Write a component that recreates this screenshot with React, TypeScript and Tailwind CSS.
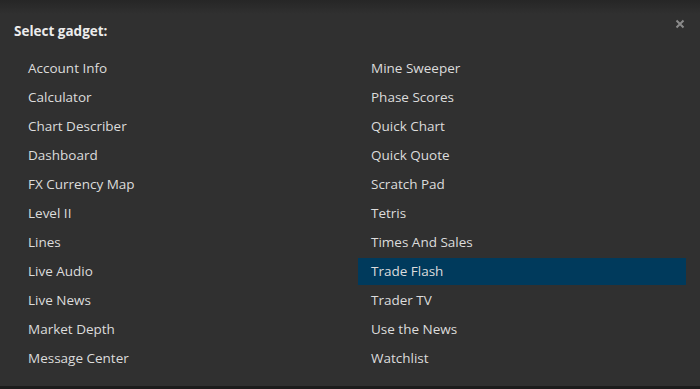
import React from "react";

const left = [
  "Account Info",
  "Calculator",
  "Chart Describer",
  "Dashboard",
  "FX Currency Map",
  "Level II",
  "Lines",
  "Live Audio",
  "Live News",
  "Market Depth",
  "Message Center",
];
const right = [
  "Mine Sweeper",
  "Phase Scores",
  "Quick Chart",
  "Quick Quote",
  "Scratch Pad",
  "Tetris",
  "Times And Sales",
  "Trade Flash",
  "Trader TV",
  "Use the News",
  "Watchlist",
];

export default function App() {
  const items = [...left, ...right];
  return (
    <div
      className="relative w-[700px] h-[389px] overflow-hidden bg-[#303030] text-[#dcdcdc]"
      style={{ fontFamily: '"Open Sans", "Liberation Sans", sans-serif' }}
    >
      <div className="absolute inset-x-0 top-0 h-[14px] bg-gradient-to-b from-[#262626] to-[#303030]" />
      <div className="absolute inset-x-0 bottom-0 h-[3px] bg-[#1c1c1c]" />
      <button className="absolute right-[15px] top-[19px] w-[10px] h-[10px] text-[#8a8a8a]">
        <svg viewBox="0 0 10 10" width="10" height="10">
          <path d="M1.5 1.5 L8.5 8.5 M8.5 1.5 L1.5 8.5" stroke="#8a8a8a" strokeWidth="2" />
        </svg>
      </button>
      <div className="relative pl-[14px] pt-[22px] h-[55px]">
        <div className="text-[13.5px] leading-[18px] font-bold text-[#ececec]">Select gadget:</div>
      </div>
      <div className="relative grid grid-flow-col grid-rows-11 grid-cols-2 gap-x-[15px] gap-y-[2px] px-[15px] pr-[14px]">
        {items.map((t) => (
          <div
            key={t}
            className={`h-[27px] flex items-center pl-[13px] text-[13.5px] ${
              t === "Trade Flash" ? "bg-[#003a5c]" : ""
            }`}
          >
            {t}
          </div>
        ))}
      </div>
    </div>
  );
}
